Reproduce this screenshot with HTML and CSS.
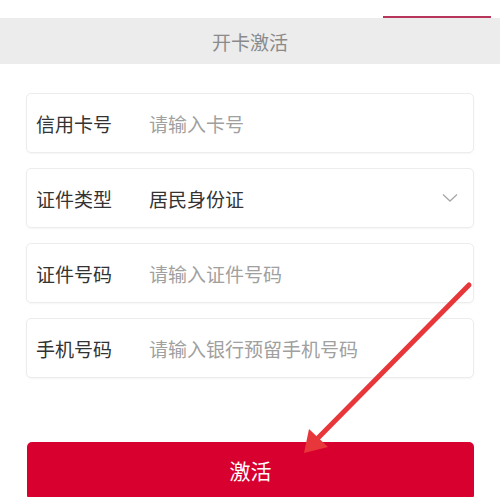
FILE: index.html
```html
<!DOCTYPE html>
<html lang="zh">
<head>
<meta charset="utf-8">
<link rel="stylesheet" href="styles.css">
</head>
<body>
<div class="page">
  <div class="tab-line"></div>
  <header class="title-bar">开卡激活</header>
  <form class="form">
    <div class="field">
      <span class="label">信用卡号</span>
      <span class="value placeholder">请输入卡号</span>
    </div>
    <div class="field">
      <span class="label">证件类型</span>
      <span class="value">居民身份证</span>
      <svg class="chevron" width="16" height="10" viewBox="0 0 16 10"><path d="M1 1.5 L8 8 L15 1.5" fill="none" stroke="#a8a8a8" stroke-width="1.3"/></svg>
    </div>
    <div class="field">
      <span class="label">证件号码</span>
      <span class="value placeholder">请输入证件号码</span>
    </div>
    <div class="field">
      <span class="label">手机号码</span>
      <span class="value placeholder">请输入银行预留手机号码</span>
    </div>
  </form>
  <button class="submit" type="button">激活</button>
  <svg class="arrow" width="500" height="497" viewBox="0 0 500 497">
    <line x1="469" y1="285" x2="316" y2="440" stroke="#e8373a" stroke-width="5" stroke-linecap="round"/>
    <polygon points="304,453 309,429 328,447" fill="#e8373a"/>
  </svg>
</div>
</body>
</html>
```
FILE: styles.css
```css
* { box-sizing: border-box; }
html, body { margin: 0; padding: 0; background: #fff; }
body {
  font-family: "Noto Sans CJK SC", "Noto Sans", sans-serif;
  width: 500px;
  height: 497px;
  overflow: hidden;
}
.page {
  position: relative;
  padding-top: 18px;
  height: 497px;
}
.tab-line {
  position: absolute;
  top: 16px;
  left: 383px;
  width: 108px;
  height: 2px;
  background: #b7345a;
}
.title-bar {
  height: 46px;
  background: #ececec;
  color: #8a8a8a;
  font-size: 19px;
  display: flex;
  align-items: center;
  justify-content: center;
}
.form {
  margin: 29px 26px 0 26px;
  display: flex;
  flex-direction: column;
  gap: 15px;
}
.field {
  height: 60px;
  border: 1px solid #ececec;
  border-radius: 5px;
  box-shadow: 0 1px 2px rgba(0,0,0,0.04);
  display: flex;
  align-items: center;
  padding: 0 14px 0 9px;
  font-size: 19px;
}
.label {
  color: #333;
  width: 113px;
  flex: none;
}
.value {
  color: #333;
  flex: 1;
}
.placeholder { color: #a0a0a0; }
.chevron { flex: none; margin-right: 1px; }
.submit {
  display: block;
  margin: 64px 26px 0 27px;
  width: 447px;
  height: 58px;
  border: none;
  border-radius: 5px;
  background: #d7002e;
  color: #fff;
  font-family: "Noto Sans CJK SC", "Noto Sans", sans-serif;
  font-size: 21px;
  padding: 0 0 2px;
}
.arrow {
  position: absolute;
  left: 0;
  top: 0;
  pointer-events: none;
}
```
